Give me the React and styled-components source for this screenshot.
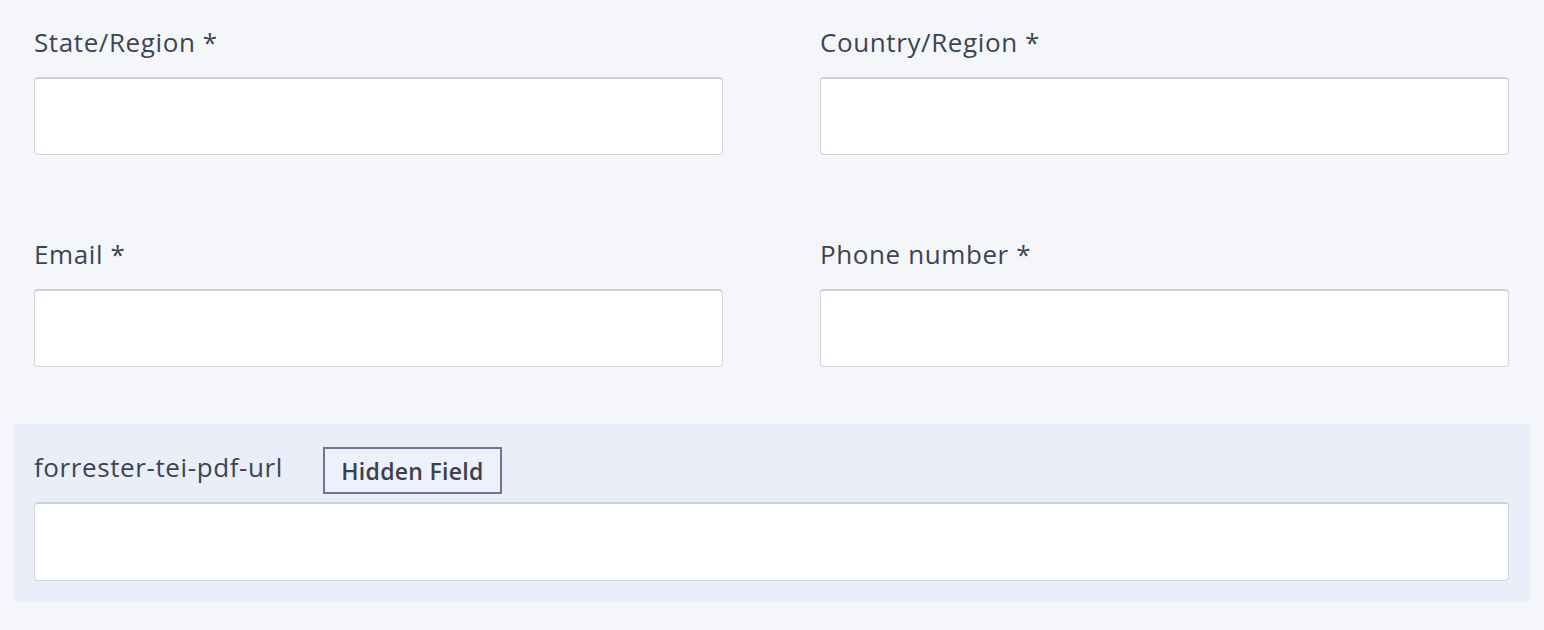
import React from "react";
import styled, { createGlobalStyle } from "styled-components";

const GlobalStyle = createGlobalStyle`
	body {
		margin: 0;
		background: #f5f6fa;
		font-family: "Open Sans", Lato, "Liberation Sans", sans-serif;
	}
`;

const Page = styled.div`
	padding: 24px 14px 28px 14px;
`;

const Grid = styled.div`
	display: grid;
	grid-template-columns: 689px 689px;
	column-gap: 97px;
	row-gap: 81px;
	padding: 0 35px 0 20px;
`;

const Field = styled.div`
	display: flex;
	flex-direction: column;
`;

const Label = styled.label`
	font-size: 26px;
	line-height: 36px;
	letter-spacing: 0.6px;
	color: #3d4452;
	margin-bottom: ${(p) => (p.$tight ? "7px" : "17px")};
`;

const Input = styled.input`
	box-sizing: border-box;
	width: 100%;
	height: ${(p) => (p.$tall ? "79px" : "78px")};
	background: #ffffff;
	border: 1.5px solid #d0d4dc;
	border-top: 2px solid #cbcfd8;
	border-radius: 4px;
	outline: none;
	padding: 0 16px;
	font: inherit;
`;

const HiddenSection = styled.div`
	margin-top: 57px;
	width: 1516px;
	background: #e9eef8;
	padding: 23px 21px 21px 20px;
	box-sizing: border-box;
`;

const LabelRow = styled.div`
	display: flex;
	align-items: center;
	gap: 40px;
	margin-bottom: 8px;
`;

const Badge = styled.span`
	box-sizing: border-box;
	height: 47px;
	width: 179px;
	display: inline-flex;
	align-items: center;
	justify-content: center;
	border: 2px solid #6d7498;
	background: #eef0fb;
	color: #3a404c;
	font-size: 23px;
	font-weight: 600;
	letter-spacing: 0.3px;
`;

const fields = [
	"State/Region *",
	"Country/Region *",
	"Email *",
	"Phone number *",
];

export default function App() {
	return (
		<>
			<GlobalStyle />
			<Page>
				<Grid>
					{fields.map((f) => (
						<Field key={f}>
							<Label>{f}</Label>
							<Input type="text" />
						</Field>
					))}
				</Grid>
				<HiddenSection>
					<LabelRow>
						<Label $tight>forrester-tei-pdf-url</Label>
						<Badge>Hidden Field</Badge>
					</LabelRow>
					<Input type="text" $tall />
				</HiddenSection>
			</Page>
		</>
	);
}
